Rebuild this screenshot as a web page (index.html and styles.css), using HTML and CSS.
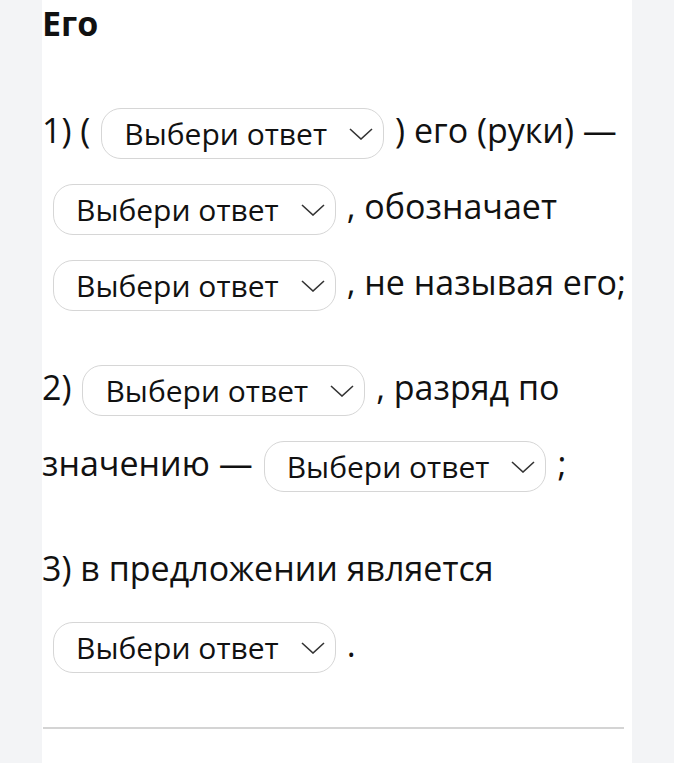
FILE: index.html
```html
<!DOCTYPE html>
<html lang="ru">
<head>
  <meta charset="UTF-8">
  <meta name="viewport" content="width=device-width, initial-scale=1.0">
  <title>Его</title>
  <link rel="stylesheet" href="styles.css">
</head>
<body>
  <div class="lista">
    <h2 class="titulo">Его</h2>

    <p class="tarea">1) (<span class="pick"><span class="pick-text">Выбери ответ</span><svg class="flecha" viewBox="0 0 24 12"><polyline points="1,1 12,11 23,1"/></svg></span>) его (руки) — <span class="pick"><span class="pick-text">Выбери ответ</span><svg class="flecha" viewBox="0 0 24 12"><polyline points="1,1 12,11 23,1"/></svg></span>, обозначает <span class="pick"><span class="pick-text">Выбери ответ</span><svg class="flecha" viewBox="0 0 24 12"><polyline points="1,1 12,11 23,1"/></svg></span>, не называя его;</p>

    <p class="tarea">2)<span class="pick"><span class="pick-text">Выбери ответ</span><svg class="flecha" viewBox="0 0 24 12"><polyline points="1,1 12,11 23,1"/></svg></span>, разряд по значению —<span class="pick"><span class="pick-text">Выбери ответ</span><svg class="flecha" viewBox="0 0 24 12"><polyline points="1,1 12,11 23,1"/></svg></span>;</p>

    <p class="tarea">3) в предложении является <span class="pick"><span class="pick-text">Выбери ответ</span><svg class="flecha" viewBox="0 0 24 12"><polyline points="1,1 12,11 23,1"/></svg></span>.</p>

    <hr class="linea">
  </div>
</body>
</html>
```

FILE: styles.css
```css
body {
  margin: 0;
  background: #f3f4f6;
  font-family: 'Open Sans', 'Noto Sans', sans-serif;
  color: #111111;
}
.lista {
  margin-left: 42px;
  width: 588px;
  padding-right: 2px;
  min-height: 763px;
  background: #ffffff;
}
.titulo {
  margin: 0;
  font-size: 34px;
  line-height: 46px;
  font-weight: 700;
}
.tarea {
  margin: 0 0 29px 0;
  font-size: 34px;
  line-height: 76px;
}
.tarea:first-of-type {
  margin-top: 46px;
}
.pick {
  display: inline-flex;
  align-items: center;
  gap: 22px;
  height: 51px;
  box-sizing: border-box;
  padding: 0 10px 0 22px;
  margin: 0 11px;
  border: 1.5px solid #d6d6d6;
  border-radius: 20px;
  vertical-align: middle;
  line-height: 1;
  font-size: 30px;
}
.flecha {
  width: 24px;
  height: 12px;
  fill: none;
  stroke: #333333;
  stroke-width: 1.6;
}
.linea {
  margin: 45px 6px 0 1px;
  border: 0;
  height: 2px;
  background: #d4d4d4;
}
```
